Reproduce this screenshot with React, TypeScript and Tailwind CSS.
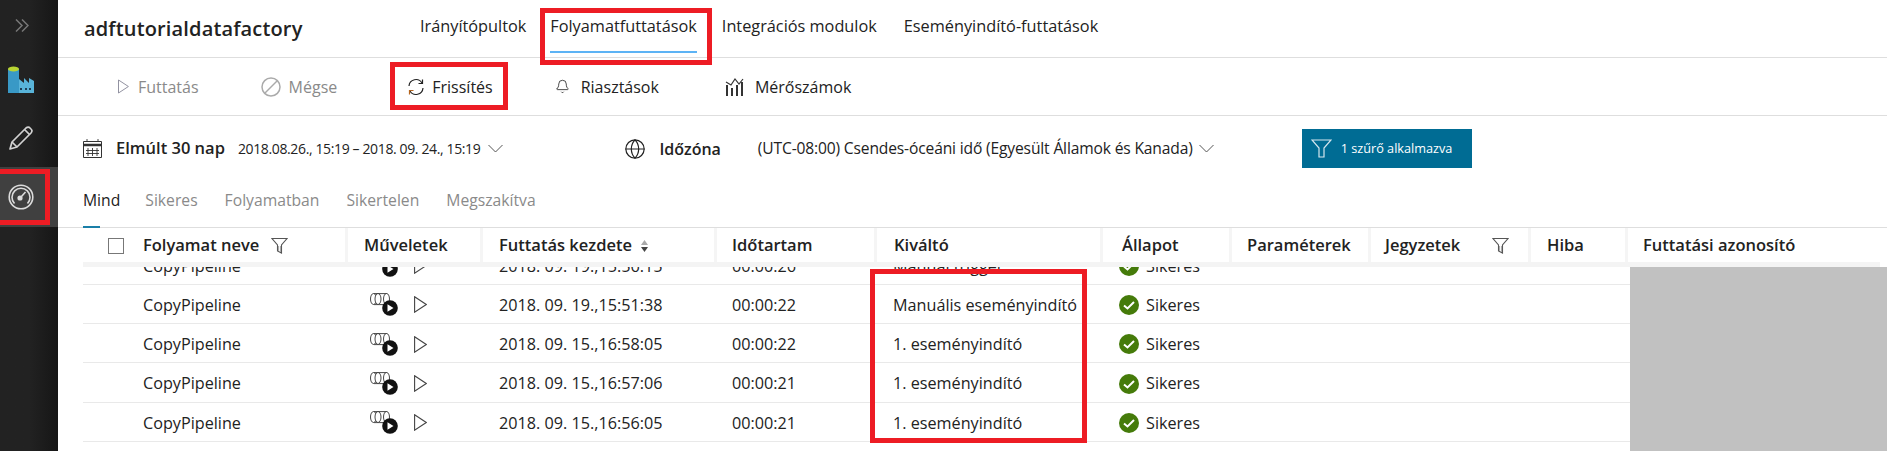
import { Bell, Globe } from 'lucide-react';

const font = { fontFamily: '"Open Sans", "Noto Sans", sans-serif' };

const navItems = [
  { label: 'Irányítópultok', className: 'ml-[119px]' },
  { label: 'Folyamatfuttatások', className: 'ml-[24px]', active: true },
  { label: 'Integrációs modulok', className: 'ml-[25px]' },
  { label: 'Eseményindító-futtatások', className: 'ml-[27px]' },
];

const statusTabs = ['Mind', 'Sikeres', 'Folyamatban', 'Sikertelen', 'Megszakítva'];

const columns = 'grid-cols-[265px_135px_234px_160px_226px_129px_139px_160px_97px_252px]';

const headers = [
  { label: 'Folyamat neve', className: 'pl-[60px]', filter: true },
  { label: 'Műveletek', className: 'pl-4' },
  { label: 'Futtatás kezdete', className: 'pl-4', sort: true },
  { label: 'Időtartam', className: 'pl-[15px]' },
  { label: 'Kiváltó', className: 'pl-[17px]' },
  { label: 'Állapot', className: 'pl-[19px]' },
  { label: 'Paraméterek', className: 'pl-[15px]' },
  { label: 'Jegyzetek', className: 'pl-[14px]', filter: true },
  { label: 'Hiba', className: 'pl-4' },
  { label: 'Futtatási azonosító', className: 'pl-[15px]' },
];

const runs = [
  { start: '2018. 09. 19.,15:56:15', duration: '00:00:26', trigger: 'Manual trigger' },
  { start: '2018. 09. 19.,15:51:38', duration: '00:00:22', trigger: 'Manuális eseményindító' },
  { start: '2018. 09. 15.,16:58:05', duration: '00:00:22', trigger: '1. eseményindító' },
  { start: '2018. 09. 15.,16:57:06', duration: '00:00:21', trigger: '1. eseményindító' },
  { start: '2018. 09. 15.,16:56:05', duration: '00:00:21', trigger: '1. eseményindító' },
];

function FactoryIcon() {
  return (
    <svg width="27" height="27" viewBox="0 0 27 27">
      <path d="M0 3h11v24H0z" fill="#3999c6" />
      <ellipse cx="5.500" cy="3" rx="5.500" ry="2.400" fill="#b8d432" />
      <path d="M11 27V13l5 4v-5l5 5v-5l5 3v12z" fill="#59b4d9" />
      <path d="M12 22h2v2h-2zM17 22h2v2h-2zM21 22h2v2h-2z" fill="#1e3f55" />
    </svg>
  );
}

function PencilIcon() {
  return (
    <svg width="26" height="26" viewBox="0 0 26 26" fill="none" stroke="#d2d2d2" strokeWidth="1.700" strokeLinejoin="round">
      <path d="M2 24l2-7L18 3c1.500-1.300 3-1.300 4 0l1 1c1.300 1.200 1.200 2.600 0 4L9 22z" />
      <path d="M4 17l5 5M16.500 4.500l5 5" />
    </svg>
  );
}

function GaugeIcon() {
  return (
    <svg width="26" height="26" viewBox="0 0 26 26" fill="none" stroke="#dcdcdc" strokeWidth="1.600">
      <circle cx="13" cy="13" r="11.800" />
      <path d="M6.500 19.500a9 9 0 1 1 13 0" />
      <circle cx="12" cy="14" r="1.800" fill="#dcdcdc" />
      <path d="M13 13l4.500-5" />
    </svg>
  );
}

function PlayOutline({ color = '#444', width = 13, height = 17 }: { color?: string; width?: number; height?: number }) {
  return (
    <svg width={width} height={height} viewBox="0 0 13 17" fill="none" stroke={color} strokeWidth="1.100">
      <path d="M.600 .800L12.300 8.500.600 16.200z" />
    </svg>
  );
}

function FunnelIcon() {
  return (
    <svg width="17" height="17" viewBox="0 0 17 17" fill="none" stroke="#555" strokeWidth="1.100">
      <path d="M1 1.500h15l-5.500 6.500v8l-4-2V8z" />
      <path d="M7.500 9v5M9.500 9v6" stroke="#aaa" />
    </svg>
  );
}

function RunIcon() {
  return (
    <svg width="28" height="23" viewBox="0 0 28 23">
      <g fill="#fff" stroke="#333" strokeWidth="0.900">
        <path d="M4 .600h13v11H4z" />
        <ellipse cx="3.500" cy="6" rx="3" ry="5.500" />
        <ellipse cx="8" cy="6" rx="3" ry="5.500" />
        <ellipse cx="16.500" cy="6" rx="3" ry="5.500" />
      </g>
      <circle cx="20" cy="15" r="7.800" fill="#111" />
      <path d="M17.500 11.300l6 3.700-6 3.700z" fill="#fff" />
    </svg>
  );
}

function SuccessIcon() {
  return (
    <svg width="20" height="20" viewBox="0 0 20 20">
      <circle cx="10" cy="10" r="10" fill="#457b0a" />
      <path d="M5 10.500l3.500 3L15 7" fill="none" stroke="#fff" strokeWidth="2" />
    </svg>
  );
}

function RefreshIcon() {
  return (
    <svg width="18" height="18" viewBox="0 0 18 18" fill="none" strokeWidth="1.200">
      <path d="M2 8a7 7 0 0 1 13-3M16 10a7 7 0 0 1-13 3" stroke="#222" />
      <path d="M15.500 1.500V5.500h-4" stroke="#222" />
      <path d="M2.500 16.500V12.500h4" stroke="#b5651d" />
    </svg>
  );
}

function MetricsIcon() {
  return (
    <svg width="19" height="19" viewBox="0 0 19 19" fill="#333">
      <path d="M1 8h2v11H1zM6 11h2v8H6zM11 8h2v11h-2zM16 5h2v14h-2z" />
      <path d="M1 5l5 3 4-6 4 5 4-5" fill="none" stroke="#333" strokeWidth="1.200" />
    </svg>
  );
}

function CalendarIcon() {
  return (
    <svg width="19" height="19" viewBox="0 0 19 19" fill="none" stroke="#333" strokeWidth="1">
      <path d="M.500 2.500h18v16H.500z" />
      <path d="M.500 6h18" strokeWidth="2.500" />
      <path d="M4 0v3M15 0v3M5 9v8M9.500 9v8M14 9v8M3 11.500h13M3 14.500h13" strokeWidth="0.900" />
    </svg>
  );
}

function Chevron() {
  return (
    <svg width="15" height="9" viewBox="0 0 15 9" fill="none" stroke="#555" strokeWidth="1">
      <path d="M.500 1l7 7 7-7" />
    </svg>
  );
}

function ToolbarButton({ icon, label, disabled, className }: { icon: React.ReactNode; label: string; disabled?: boolean; className: string }) {
  return (
    <div className={`flex items-center ${className}`}>
      {icon}
      <span className={`text-[16px] ${disabled ? 'text-[#8a8a8a]' : 'text-[#222]'}`}>{label}</span>
    </div>
  );
}

export default function App() {
  return (
    <div className="relative flex h-screen w-full overflow-hidden bg-white text-[#222]" style={font}>
      {/* Sidebar */}
      <aside className="flex w-[58px] shrink-0 flex-col bg-gradient-to-r from-[#222222] via-[#222222] to-[#161616]">
        <div className="flex h-[50px] items-center pl-[15px]">
          <svg width="14" height="13" viewBox="0 0 14 13" fill="none" stroke="#777" strokeWidth="1.500">
            <path d="M1 .500l6 6-6 6M7 .500l6 6-6 6" />
          </svg>
        </div>
        <div className="flex h-[58px] items-center pl-2">
          <FactoryIcon />
        </div>
        <div className="flex h-[59px] items-center pl-2">
          <PencilIcon />
        </div>
        <div className="flex h-[60px] items-center bg-[#404040] pl-2">
          <GaugeIcon />
        </div>
      </aside>

      <main className="flex min-w-0 flex-1 flex-col">
        {/* Title and pages */}
        <header className="flex h-[58px] shrink-0 items-center border-b border-[#dedede] pl-[26px]">
          <h1 className="w-[217px] shrink-0 text-[20px] font-semibold tracking-[0.15px] whitespace-nowrap text-[#222]">adftutorialdatafactory</h1>
          {navItems.map((item) => (
            <div key={item.label} className={`relative flex h-full items-center text-[16.300px] whitespace-nowrap ${item.className}`}>
              <span className="-mt-[4px]">{item.label}</span>
              {item.active && <div className="absolute right-0 bottom-[4px] left-0 h-[2px] bg-[#5cb3f5]" />}
            </div>
          ))}
        </header>

        {/* Toolbar */}
        <div className="flex h-[58px] shrink-0 items-center border-b border-[#dedede]">
          <ToolbarButton className="ml-[60px] gap-[9px]" icon={<PlayOutline color="#8a8a9a" width={11} height={15} />} label="Futtatás" disabled />
          <ToolbarButton className="ml-[62px] gap-[8px]" icon={<svg width="20" height="20" viewBox="0 0 20 20" fill="none" stroke="#aaa" strokeWidth="1.500"><circle cx="10" cy="10" r="9" /><path d="M4 16L16 4" /></svg>} label="Mégse" disabled />
          <ToolbarButton className="ml-[70px] gap-[7px]" icon={<RefreshIcon />} label="Frissítés" />
          <ToolbarButton className="ml-[62px] gap-[11px]" icon={<Bell size={15} strokeWidth={1.300} />} label="Riasztások" />
          <ToolbarButton className="ml-[66px] gap-[11px]" icon={<MetricsIcon />} label="Mérőszámok" />
        </div>

        {/* Time range and filter */}
        <div className="flex h-[57px] shrink-0 items-center pt-[8px] pl-[25px]">
          <CalendarIcon />
          <span className="ml-[14px] text-[16.500px] font-semibold whitespace-nowrap">Elmúlt 30 nap</span>
          <span className="ml-[13px] text-[14px] tracking-[-0.37px] whitespace-nowrap">2018.08.26., 15:19 – 2018. 09. 24., 15:19</span>
          <span className="ml-[8px]"><Chevron /></span>
          <Globe size={22} strokeWidth={1.300} className="ml-[121px] shrink-0" />
          <span className="ml-[13px] text-[16px] font-semibold">Időzóna</span>
          <span className="ml-[37px] text-[15.600px] tracking-[-0.15px] whitespace-nowrap">(UTC-08:00) Csendes-óceáni idő (Egyesült Államok és Kanada)</span>
          <span className="ml-[6px]"><Chevron /></span>
          <button className="ml-[88px] flex h-[39px] w-[170px] shrink-0 items-center gap-[9px] bg-[#006c94] pl-[9px] text-[12.700px] whitespace-nowrap text-white">
            <svg width="21" height="21" viewBox="0 0 21 21" fill="none" stroke="#d5e6ee" strokeWidth="1.200">
              <path d="M1 2h19l-7 8v9h-5v-9z" />
            </svg>
            1 szűrő alkalmazva
          </button>
        </div>

        {/* Status tabs */}
        <div className="flex h-[55px] shrink-0 items-center border-b border-[#dedede] pl-[25px] text-[15.700px]">
          {statusTabs.map((tab, i) => (
            <div key={tab} className={`relative flex h-full items-center ${i === 0 ? 'mr-[25px] text-[#222]' : 'mr-[27px] text-[#8a8a8a]'}`}>
              <span className="mt-[1px]">{tab}</span>
              {i === 0 && <div className="absolute right-[20px] -bottom-[1px] left-0 h-[2px] bg-[#1a7fa8]" />}
            </div>
          ))}
        </div>

        {/* Table head */}
        <div className={`ml-[25px] mr-[7px] grid h-[39px] shrink-0 border-b-[5px] border-[#f4f4f4] ${columns}`}>
          {headers.map((h, i) => (
            <div key={h.label} className={`relative flex items-center pt-[1px] text-[16.500px] font-semibold whitespace-nowrap ${h.className} ${i < headers.length - 1 ? 'border-r-[3px] border-[#f5f5f5]' : ''}`}>
              {i === 0 && <span className="absolute left-[25px] h-4 w-4 border border-[#777]" />}
              {h.label}
              {h.filter && h.label === 'Folyamat neve' && <span className="ml-3"><FunnelIcon /></span>}
              {h.filter && h.label === 'Jegyzetek' && <span className="ml-[32px]"><FunnelIcon /></span>}
              {h.sort && (
                <svg className="ml-[9px]" width="7" height="12" viewBox="0 0 7 12">
                  <path d="M3.500 0L7 5H0z" fill="#aaa" />
                  <path d="M3.500 12L7 7H0z" fill="#444" />
                </svg>
              )}
            </div>
          ))}
        </div>

        {/* Rows, scrolled so the first one is cut by the head */}
        <div className="relative flex min-h-0 flex-1 flex-col justify-end overflow-hidden pb-[9px] pl-[25px]">
          {runs.map((run) => (
            <div key={run.start} className={`grid h-[39.300px] shrink-0 items-center border-b border-[#e9e9e9] pt-[2px] text-[16.200px] ${columns}`}>
              <div className="pl-[60px]">CopyPipeline</div>
              <div className="flex items-center pl-[22px]">
                <RunIcon />
                <span className="ml-[16px] flex"><PlayOutline /></span>
              </div>
              <div className="pl-4 whitespace-nowrap">{run.start}</div>
              <div className="pl-[15px]">{run.duration}</div>
              <div className="pl-4 whitespace-nowrap">{run.trigger}</div>
              <div className="flex items-center gap-[7px] pl-4">
                <SuccessIcon />
                Sikeres
              </div>
            </div>
          ))}
          {/* Redacted run ids */}
          <div className="absolute top-0 right-0 bottom-0 w-[257px] bg-[#c1c1c1]" />
        </div>
      </main>

      {/* Red highlight boxes from the tutorial */}
      <div className="pointer-events-none absolute top-[169px] left-0 h-[56px] w-[50px] border-y-[5px] border-r-[5px] border-[#ed1c24]" />
      <div className="pointer-events-none absolute top-[8px] left-[540px] h-[57px] w-[172px] border-[5px] border-[#ed1c24]" />
      <div className="pointer-events-none absolute top-[62px] left-[390px] h-[48px] w-[118px] border-[5px] border-[#ed1c24]" />
      <div className="pointer-events-none absolute top-[269px] left-[870px] h-[174px] w-[217px] border-[5px] border-[#ed1c24]" />
    </div>
  );
}
